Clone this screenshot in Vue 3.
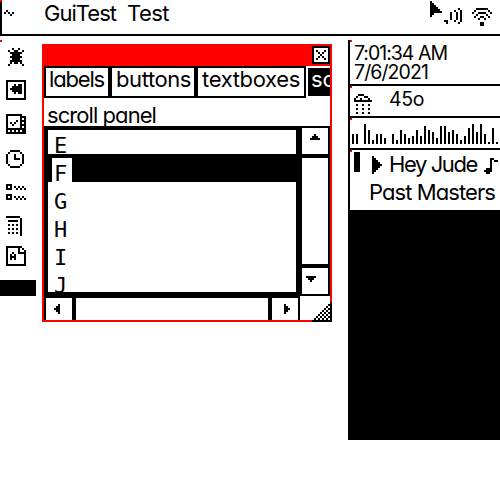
<script setup>
import { h } from 'vue'

// Bitmaps are drawn on a grid of 2px cells.
const art = {
  tilde: ['.#...', '#.#.#', '...#.'],
  cursor: ['#.....', '##....', '###...', '####..', '#####.', '######', '##....', '#.....'],
  sound: ['.......#.', '.....#..#', '...#..#.#', '...#..#.#', '...#..#.#', '...#..#.#', '##...#..#', '.#.....#.'],
  wifi: ['..######..', '.#......#.', '#..####..#', '..#....#..', '.#..##..#.', '...#..#...', '..........', '....##....', '....##....'],
  bug: ['..#..#..', '#..##..#', '.######.', '..####..', '.######.', '..####..', '.######.', '.#.##.#.', '#......#'],
  media: ['##########', '#........#', '#...#.##.#', '#..#####.#', '#.######.#', '#..#####.#', '#...#.##.#', '#........#', '#........#', '##########'],
  tasks: ['########..', '#......###', '#......#.#', '#....#.###', '#.#.#..#.#', '#..#...###', '#......#.#', '##########', '#.#.#.#.##', '##########'],
  clock: ['..#####..', '.#.....#.', '#...#...#', '#...#...#', '#...###.#', '#.......#', '#.......#', '.#.....#.', '..#####..'],
  list: ['###.......', '#.#.#.#.#.', '###..#.#.#', '..........', '..........', '###.......', '#.#.#.#.#.', '###..#.#.#'],
  calc: ['#######.', '.......#', '.#####.#', '.......#', '.#.#.#.#', '.......#', '.#.#.#.#', '.......#', '.#.#.#.#', '.......#'],
  doc: ['########..', '#.....#.#.', '#.....#..#', '#..#..####', '#.#.#....#', '#.###....#', '#.#.#....#', '#........#', '#........#', '##########'],
  cloud: ['..###....', '.#...##..', '#..#...#.', '#########', '.........', '.#..#..#.', '.........', '.#..#..#.', '.........', '.#..#..#.'],
  play: ['#....', '##...', '###..', '####.', '#####', '####.', '###..', '##...', '#....'],
  note: ['...##..', '...#.##', '...#...', '...#...', '...#...', '.###...', '####...', '.##....'],
  up: ['..#..', '.###.', '#####'],
  down: ['#####', '.###.', '..#..'],
  left: ['..#', '.##', '###', '.##', '..#'],
  right: ['#..', '##.', '###', '##.', '#..'],
  close: ['#...#', '.#.#.', '..#..', '.#.#.', '#...#'],
  grip: ['.........#', '........##', '.......#.#', '......#.##', '.....#.#.#', '....#.#.##', '...#.#.#.#', '..#.#.#.##', '.#.#.#.#.#', '##########'],
}

const Pix = (props) => {
  const rows = art[props.name]
  const w = rows[0].length
  const d = rows
    .map((row, y) => [...row].map((c, x) => (c === '#' ? `M${x} ${y}h1v1h-1z` : '')).join(''))
    .join('')
  return h(
    'svg',
    { width: w * 2, height: rows.length * 2, viewBox: `0 0 ${w} ${rows.length}`, 'shape-rendering': 'crispEdges', 'aria-hidden': 'true' },
    [h('path', { d, fill: 'currentColor' })],
  )
}
Pix.props = ['name']

// Tracks a text run so that it takes the given width.
const vFit = {
  mounted(el, { value }) {
    const natural = el.getBoundingClientRect().width
    el.style.letterSpacing = `${(value - natural) / el.textContent.length}px`
  },
}

const tools = ['bug', 'media', 'tasks', 'clock', 'list', 'calc', 'doc']
const tabs = [
  { name: 'labels', width: 55 },
  { name: 'buttons', width: 75 },
  { name: 'textboxes', width: 98 },
]
const rows = ['E', 'F', 'G', 'H', 'I', 'J']
const levels = [5, 5, 0, 10, 7, 2, 5, 5, 3, 0, 5, 2, 7, 5, 3, 4, 7, 4, 9, 7, 6, 3, 9, 9, 6, 7, 5, 2, 4, 8, 10, 6, 10, 5, 1, 8, 1]
</script>

<template>
  <div class="screen">
    <header class="menubar">
      <Pix class="tilde" name="tilde" />
      <span class="app t"><span v-fit="72">GuiTest</span></span>
      <span class="menu t"><span v-fit="42">Test</span></span>
      <Pix class="cursor" name="cursor" />
      <Pix class="sound" name="sound" />
      <Pix class="wifi" name="wifi" />
    </header>

    <div class="desk">
      <nav class="tools">
        <Pix v-for="t in tools" :key="t" :name="t" :class="t" />
        <div class="slot"></div>
      </nav>

      <section class="window">
        <div class="title"><button class="close"><Pix name="close" /></button></div>
        <div class="tabs">
          <div v-for="t in tabs" :key="t.name" class="tab t" :class="t.name"><span v-fit="t.width">{{ t.name }}</span></div>
          <div class="tab active t"><span>scroll</span></div>
        </div>
        <div class="caption t"><span v-fit="109">scroll panel</span></div>
        <div class="panel">
          <div class="rows">
            <div v-for="r in rows" :key="r" class="row t" :class="{ picked: r === 'F' }"><span class="cell">{{ r }}</span></div>
          </div>
          <div class="vbar">
            <div class="vbtn"><Pix name="up" /></div>
            <div class="vtrack"></div>
            <div class="vbtn low"><Pix name="down" /></div>
          </div>
        </div>
        <div class="hbar">
          <div class="hbtn first"><Pix name="left" /></div>
          <div class="htrack"></div>
          <div class="hbtn last"><Pix name="right" /></div>
        </div>
        <div class="grip"><Pix name="grip" /></div>
      </section>

      <aside class="side">
        <div class="box time t">
          <div><span v-fit="93">7:01:34 AM</span></div>
          <div><span v-fit="74">7/6/2021</span></div>
        </div>
        <div class="box weather t"><Pix name="cloud" /><span v-fit="35">45o</span></div>
        <div class="box meter"><i v-for="(v, i) in levels" :key="i" :style="{ height: v * 2 + 'px' }"></i></div>
        <div class="box music t">
          <div class="song"><i class="mark"></i><Pix class="play" name="play" /><span v-fit="88">Hey Jude</span><Pix class="note" name="note" /></div>
          <div class="album"><span v-fit="126">Past Masters</span></div>
        </div>
      </aside>
    </div>
  </div>
</template>

<style>
body { margin: 0; background: #fff; }
</style>

<style scoped>
.screen { width: 500px; height: 500px; overflow: hidden; background: #fff; color: #000; }
.screen, .screen * { box-sizing: border-box; }
svg { display: block; flex: none; }
.t { font: 400 22px/28px Inter, "DejaVu Sans Condensed", sans-serif; font-feature-settings: "cv11" 1, "calt" 0; white-space: nowrap; }

.menubar { position: relative; display: flex; align-items: flex-start; height: 36px; border-left: 2px solid #000; border-bottom: 2px solid #000; }
.menubar::before { content: ""; position: absolute; left: -2px; top: 0; width: 2px; height: 2px; background: red; }
.tilde { margin: 10px 0 0 2px; }
.app { margin: -1px 0 0 30px; width: 83px; }
.menu { margin-top: -1px; width: 303px; }
.cursor { margin-top: 1px; }
.sound { margin: 8px 0 0 2px; }
.wifi { margin: 8px 0 0 10px; }

.desk { display: flex; align-items: flex-start; }
.tools { position: relative; width: 36px; height: 260px; margin-right: 6px; padding-left: 6px; }
.tools::before { content: ""; position: absolute; left: 0; top: 4px; width: 2px; height: 2px; background: red; }
.bug { margin: 12px 0 0 2px; }
.media { margin-top: 14px; }
.tasks { margin-top: 14px; }
.clock { margin-top: 16px; }
.list { margin-top: 16px; }
.calc { margin-top: 16px; }
.doc { margin-top: 10px; }
.slot { height: 16px; margin: 14px 0 0 -6px; background: #000; }

.window { position: relative; width: 290px; height: 278px; margin: 8px 16px 0 0; border: 2px solid red; border-top: 0; }
.title { display: flex; justify-content: flex-end; align-items: flex-start; height: 22px; padding-top: 2px; background: red; }
.close { display: grid; place-items: center; width: 18px; height: 18px; padding: 0; border: 2px solid #000; background: #fff; color: #000; }
.tabs { display: flex; height: 32px; overflow: hidden; }
.tab { flex: none; height: 32px; border: 2px solid #000; padding-left: 3px; line-height: 22px; }
.labels { width: 66px; }
.buttons { width: 86px; padding-left: 4px; }
.textboxes { width: 110px; padding-left: 4px; }
.active { width: 40px; height: 28px; margin: 2px 0 0 2px; border: 0; background: #000; color: #fff; }
.caption { height: 28px; padding-left: 3px; line-height: 34px; overflow: hidden; }
.panel { display: flex; height: 170px; }
.rows { width: 256px; height: 170px; border: 4px solid #000; overflow: hidden; }
.row { height: 28px; padding: 4px 0 0 4px; }
.row:first-child { height: 24px; padding-top: 0; }
.picked { background: #000; }
.cell { display: block; width: 20px; height: 24px; padding-left: 2px; font: 400 22px/32px "DejaVu Sans Mono", monospace; background: #fff; overflow: hidden; }
.vbar { display: flex; flex-direction: column; width: 30px; height: 170px; border: 2px solid #000; }
.vbtn { height: 28px; border-bottom: 2px solid #000; padding: 6px 0 0 8px; }
.vtrack { flex: 1; border: solid #000; border-width: 2px 0; }
.vbtn.low { border-top: 2px solid #000; border-bottom: 0; padding: 8px 0 0 4px; }
.hbar { display: flex; width: 256px; height: 24px; border: solid #000; border-width: 2px 2px 0; }
.hbtn { width: 28px; }
.first { border-right: 2px solid #000; padding: 6px 0 0 8px; }
.htrack { flex: 1; border: solid #000; border-width: 0 2px; }
.last { border-left: 2px solid #000; padding: 6px 0 0 12px; }
.grip { position: absolute; right: -2px; bottom: -2px; background: #fff; }

.side { width: 152px; height: 400px; margin-top: 4px; border-left: 2px solid #000; background: #000; }
.box { position: relative; background: #fff; border-bottom: 2px solid #000; overflow: hidden; }
.box::before { content: ""; position: absolute; left: 0; top: 0; width: 2px; height: 2px; background: red; }
.time { height: 46px; padding: 4px 0 0 4px; font-size: 19.5px; line-height: 19px; }
.weather { display: flex; height: 32px; padding: 8px 0 0 4px; font-size: 19.5px; line-height: 10px; }
.weather span { margin-left: 17px; }
.meter { display: flex; align-items: flex-end; gap: 2px; height: 32px; padding: 0 0 4px 2px; }
.meter i { flex: none; width: 2px; background: #000; }
.music { height: 60px; border: 0; }
.song { display: flex; height: 28px; }
.mark { width: 6px; height: 20px; margin: 2px 12px 0 4px; background: #000; }
.play { margin: 6px 7px 0 0; }
.note { margin: 8px 0 0 7px; }
.album { padding-left: 19px; }
</style>
